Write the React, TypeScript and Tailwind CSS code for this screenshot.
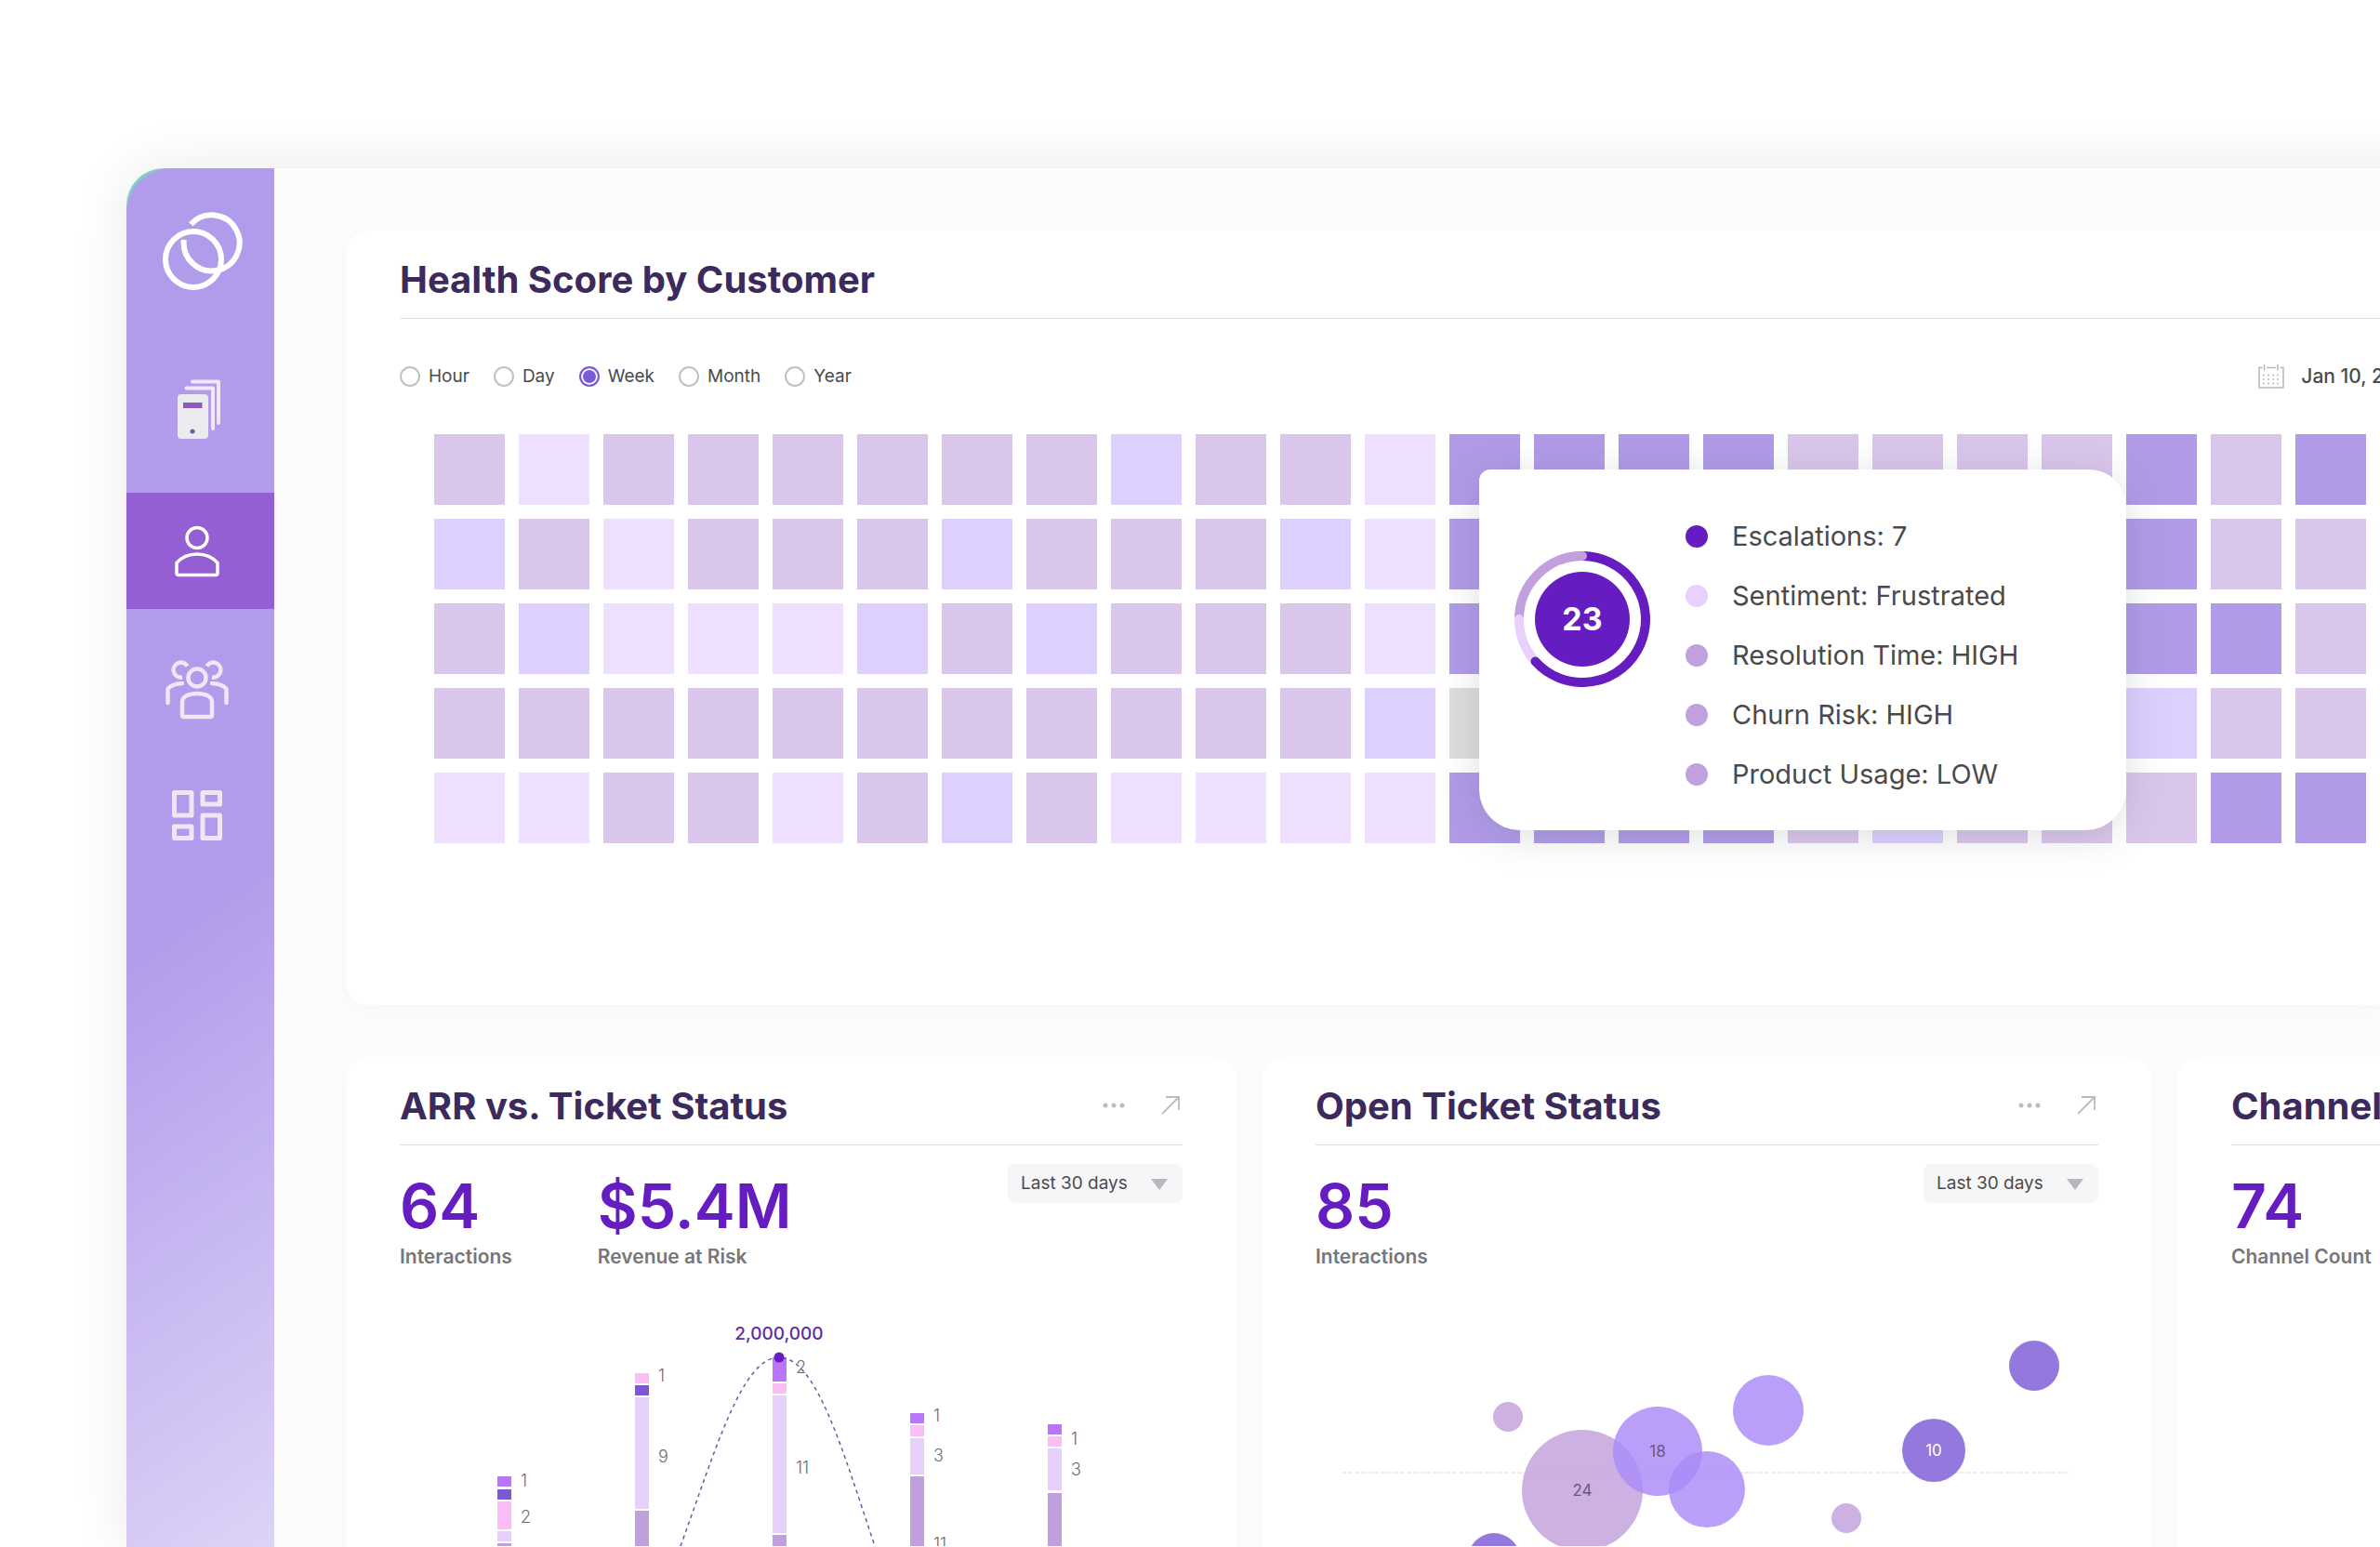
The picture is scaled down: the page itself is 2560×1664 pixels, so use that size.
import { useState } from "react";
import type { ReactNode } from "react";
import clsx from "clsx";

type Tone = "m" | "l" | "b" | "d" | "g";

const TONES: Record<Tone, string> = {
    m: "bg-[#dbc6eb]",
    l: "bg-[#efe0ff]",
    b: "bg-[#ddd0ff]",
    d: "bg-[#b19be9]",
    g: "bg-[#dcdedd]"
};

// one letter per customer, one string per row
const HEATMAP = [
    "mlmmmmmmbmmlddddmmmmdmdm",
    "bmlmmmbmmmbldmmmmmmmdmmm",
    "mblllbmbmmmldmmmmmmmddmm",
    "mmmmmmmmmmmbgmmmmmmmbmmm",
    "llmmlmbmllllddddmbmmmddm"
];

const PERIODS = ["Hour", "Day", "Week", "Month", "Year"];

const DETAILS = [
    { label: "Escalations: 7", color: "bg-[#651dc1]" },
    { label: "Sentiment: Frustrated", color: "bg-[#e8d1fc]" },
    { label: "Resolution Time: HIGH", color: "bg-[#c2a0de]" },
    { label: "Churn Risk: HIGH", color: "bg-[#c2a0de]" },
    { label: "Product Usage: LOW", color: "bg-[#c2a0de]" }
];

const PURPLE = "#b975fb";
const VIOLET = "#7e57d5";
const PINK = "#fbbdf6";
const LILAC = "#e7d0fc";
const MAUVE = "#c0a0dc";

const BARS = [
    {
        x: 105,
        segments: [[199, 210, PURPLE], [213, 224, VIOLET], [226, 256, PINK], [258, 269, LILAC], [271, 274, MAUVE]],
        labels: [[210, "1"], [249, "2"]]
    },
    {
        x: 253,
        segments: [[88, 99, PINK], [101, 112, VIOLET], [114, 234, LILAC], [236, 274, MAUVE]],
        labels: [[97, "1"], [184, "9"]]
    },
    {
        x: 401,
        segments: [[71, 97, PURPLE], [99, 110, PINK], [112, 260, LILAC], [262, 274, MAUVE]],
        labels: [[88, "2"], [196, "11"]]
    },
    {
        x: 549,
        segments: [[131, 142, PURPLE], [144, 156, PINK], [158, 197, LILAC], [199, 274, MAUVE]],
        labels: [[140, "1"], [183, "3"], [278, "11"]]
    },
    {
        x: 697,
        segments: [[143, 154, PURPLE], [156, 167, PINK], [169, 214, LILAC], [217, 274, MAUVE]],
        labels: [[165, "1"], [198, "3"]]
    }
] as { x: number; segments: [number, number, string][]; labels: [number, string][] }[];

const BUBBLES = [
    { x: 207, y: 135, r: 16, fill: "#c2a0dc" },
    { x: 287, y: 214, r: 65, fill: "#c2a0dc", label: "24" },
    { x: 368, y: 172, r: 48, fill: "#a98af8", label: "18" },
    { x: 421, y: 213, r: 41, fill: "#a98af8" },
    { x: 487, y: 128, r: 38, fill: "#a98af8" },
    { x: 571, y: 244, r: 16, fill: "#c2a0dc" },
    { x: 665, y: 171, r: 34, fill: "#7e5ad7", label: "10", light: true },
    { x: 773, y: 80, r: 27, fill: "#7e5ad7" },
    { x: 192, y: 288, r: 28, fill: "#7e5ad7" }
];

const LogoIcon = () => (
    <svg width="88" height="84" viewBox="0 0 88 84" fill="none" stroke="#fff" strokeWidth="6" aria-hidden="true">
        <circle cx="33" cy="51" r="30" />
        <path d="M30.3 13.3A30 30 0 1 1 22.8 30" />
    </svg>
);

const DevicesIcon = () => (
    <svg width="50" height="64" viewBox="-4 0 50 64" fill="none" aria-hidden="true">
        <g stroke="#efe7f8" strokeWidth="4" strokeLinecap="round" strokeLinejoin="round">
            <path d="M16 2.500H44V47" />
            <path d="M9.500 9.500H38V53" />
        </g>
        <rect y="16" width="33" height="48" rx="4" fill="#ececee" />
        <path d="M6 28H26.500" stroke="#8a5cc0" strokeWidth="6" />
        <circle cx="16" cy="56" r="2.500" fill="#7d52b8" />
    </svg>
);

const PersonIcon = () => (
    <svg width="48" height="56" viewBox="0 0 48 56" fill="none" stroke="#fff" strokeWidth="3.500" strokeLinejoin="round" aria-hidden="true">
        <circle cx="24" cy="13.500" r="11" />
        <path d="M2 40.500C8 33.500 15 31 24 31S40 33.500 46 40.500V51.500Q46 53.500 44 53.500H4Q2 53.500 2 51.500Z" />
    </svg>
);

const TeamIcon = () => (
    <svg width="68" height="64" viewBox="0 0 68 64" fill="none" stroke="#efe7f8" strokeWidth="4.500" strokeLinecap="round" strokeLinejoin="round" aria-hidden="true">
        <circle cx="34" cy="19" r="9.500" />
        <path d="M18 45C18 39 25 36 34 36S50 39 50 45V59Q50 61 48 61H20Q18 61 18 59Z" />
        <g strokeLinecap="butt">
            <path d="M23.500 6.500A8 8 0 1 0 18 18.500" />
            <path d="M44.500 6.500A8 8 0 1 1 50 18.500" />
        </g>
        <path d="M18 25C10 25.500 5 28 2.500 31V46" />
        <path d="M50 25C58 25.500 63 28 65.500 31V46" />
    </svg>
);

const BoardIcon = () => (
    <svg width="54" height="54" viewBox="0 0 54 54" fill="none" stroke="#efe5f5" strokeWidth="5" strokeLinejoin="round" aria-hidden="true">
        <rect x="2.500" y="2.500" width="18.500" height="24.500" />
        <rect x="33" y="2.500" width="18.500" height="12.500" />
        <rect x="2.500" y="39" width="18.500" height="12.500" />
        <rect x="33" y="27" width="18.500" height="24.500" />
    </svg>
);

const CalendarIcon = () => (
    <svg width="28" height="28" viewBox="0 0 28 28" fill="none" stroke="#b5b8bb" strokeWidth="1.500" aria-hidden="true">
        <path d="M4.500 4.500H1V26H27V4.500H23.500M9 4.500H19M6.500 1V7.500M21 1V7.500" />
        <path d="M5 12.500H24M5 17H24M5 21.500H24" strokeDasharray="2 3" />
    </svg>
);

const MoreIcon = () => (
    <svg width="24" height="24" viewBox="0 0 24 24" fill="#b9bbbd" aria-hidden="true">
        <circle cx="3" cy="11" r="2.500" />
        <circle cx="12" cy="11" r="2.500" />
        <circle cx="21" cy="11" r="2.500" />
    </svg>
);

const OpenIcon = () => (
    <svg width="22" height="24" viewBox="0 0 22 24" fill="none" stroke="#b9bbbd" strokeWidth="1.800" aria-hidden="true">
        <path d="M0 20L18 2M4 2H18V16" />
    </svg>
);

interface NavItemProps {
    label: string;
    className: string;
    children: ReactNode;
}

const NavItem = ({ label, className, children }: NavItemProps) => (
    <a
        href="#"
        aria-label={label}
        className={clsx("flex w-full items-center justify-center pr-[7px]", className)}
    >
        {children}
    </a>
);

const Sidebar = () => (
    <aside className="w-[159px] shrink-0 overflow-hidden rounded-tl-[40px] bg-[#7fd0c4]">
        <nav className="flex h-full flex-col rounded-tl-[48px] bg-[linear-gradient(145deg,#b19beb_52%,#ddd3f7_100%)]">
            <a href="#" aria-label="Home" className="flex h-[169px] items-center justify-center pt-2 pl-[6px]">
                <LogoIcon />
            </a>
            <NavItem label="Devices" className="h-[180px]"><DevicesIcon /></NavItem>
            <NavItem label="Customers" className="h-[125px] bg-[#935fd2]"><PersonIcon /></NavItem>
            <NavItem label="Teams" className="h-[174px]"><TeamIcon /></NavItem>
            <NavItem label="Boards" className="h-24"><BoardIcon /></NavItem>
        </nav>
    </aside>
);

interface CardProps {
    title: string;
    withActions?: boolean;
    className?: string;
    children: ReactNode;
}

const Card = ({ title, withActions, className, children }: CardProps) => (
    <section className={clsx("bg-white pl-[58px] shadow-[0_6px_20px_rgba(0,0,0,0.025)]", className)}>
        <header className="flex h-[95px] items-center justify-between border-b border-[#dededf] pt-3">
            <h2 className="text-[40px] leading-[48px] font-bold whitespace-nowrap text-[#3c2a5c]">{title}</h2>
            {withActions &&
            <div className="flex items-center gap-10">
                <button type="button" aria-label="More"><MoreIcon /></button>
                <button type="button" aria-label="Open"><OpenIcon /></button>
            </div>}
        </header>
        {children}
    </section>
);

const Stat = ({ value, label }: { value: string; label: string }) => (
    <div>
        <p className="text-[66px] leading-[70px] font-semibold text-[#651dc1]">{value}</p>
        <p className="mt-2 text-[21px] leading-6 font-semibold whitespace-nowrap text-[#77777a]">{label}</p>
    </div>
);

const RangeSelect = ({ label }: { label: string }) => (
    <div className="relative mt-5">
        <select
            aria-label={label}
            className="h-[42px] w-[188px] appearance-none rounded-lg bg-[#f6f6f8] pl-[14px] text-[19px] text-[#4b4b4d]"
        >
            <option>Last 30 days</option>
        </select>
        <svg
            className="pointer-events-none absolute top-4 right-4"
            width="18"
            height="12"
            viewBox="0 0 18 12"
            fill="#b7b8bb"
            aria-hidden="true"
        >
            <path d="M0 0H18L9 12Z" />
        </svg>
    </div>
);

const ScoreRing = () => (
    <svg width="146" height="146" viewBox="0 0 146 146" fill="none" strokeWidth="10" strokeLinecap="round">
        <path d="M5 73A68 68 0 0 1 73 5" stroke="#c2a0de" />
        <path d="M22.500 118.500A68 68 0 0 1 5 73" stroke="#e8d1fc" />
        <path d="M73 5A68 68 0 1 1 22.500 118.500" stroke="#651dc1" />
        <path d="M50 9A68 68 0 0 1 73 5" stroke="#c2a0de" />
        <circle cx="73" cy="73" r="51" fill="#651dc1" />
        <text x="73" y="85" textAnchor="middle" fill="#fff" className="text-[34px] font-bold">23</text>
    </svg>
);

const ScoreTooltip = () => (
    <div
        role="tooltip"
        className="absolute top-[38px] left-[1124px] flex w-[696px] rounded-tl-xl rounded-tr-[40px] rounded-b-[44px] bg-white pt-10 pb-7 pl-[38px] shadow-[0_6px_44px_rgba(60,80,70,0.18)]"
    >
        <div className="pt-12">
            <ScoreRing />
        </div>
        <ul className="ml-[38px]">
            {DETAILS.map(({ label, color }) => (
                <li key={label} className="flex h-16 items-center gap-[26px] text-[29px] text-[#4a4a4c]">
                    <span className={clsx("size-6 rounded-full", color)} />
                    {label}
                </li>
            ))}
        </ul>
    </div>
);

const Heatmap = () => (
    <div className="relative mt-[46px] ml-[37px]">
        <div className="grid grid-cols-[repeat(24,76px)] gap-[15px]">
            {HEATMAP.map((row, y) => row.split("").map((tone, x) => (
                <span key={`${y}-${x}`} className={clsx("h-[76px]", TONES[tone as Tone])} />
            )))}
        </div>
        <ScoreTooltip />
    </div>
);

const HealthScore = () => {
    const [period, setPeriod] = useState("Week");

    return (
        <Card title="Health Score by Customer" className="rounded-l-3xl pb-[174px]">
            <div className="mt-[46px] flex h-8 items-center justify-between">
                <div className="flex gap-[26px]">
                    {PERIODS.map(item => (
                        <label key={item} className="flex items-center gap-[9px] text-[19px] text-[#4b4b4d]">
                            <input
                                type="radio"
                                name="period"
                                value={item}
                                checked={item === period}
                                onChange={() => setPeriod(item)}
                                className="size-[22px] appearance-none rounded-full border-2 border-[#bfc1c3] bg-white checked:border-[#7a5ad8] checked:bg-[#7a5ad8] checked:shadow-[inset_0_0_0_2px_#fff]"
                            />
                            {item}
                        </label>
                    ))}
                </div>
                <button type="button" className="-mr-1 flex items-center gap-[18px] text-[21px] font-medium whitespace-nowrap text-[#4b4b4d]">
                    <CalendarIcon />
                    Jan 10, 2
                </button>
            </div>
            <Heatmap />
        </Card>
    );
};

const RevenueChart = () => (
    <svg viewBox="0 0 842 274" className="mt-[25px] w-full text-lg" fill="none">
        {BARS.map(({ x, segments, labels }) => (
            <g key={x}>
                {segments.map(([top, bottom, fill]) => (
                    <rect key={top} x={x} y={top} width="15" height={bottom - top} fill={fill} />
                ))}
                {labels.map(([y, text]) => (
                    <text key={y} x={x + 25} y={y} fill="#6d6d70" className="font-light">{text}</text>
                ))}
            </g>
        ))}
        <path
            d="M302 274C340 170 368 71 408 71S476 170 511 274"
            stroke="#6a5aa8"
            strokeWidth="1.500"
            strokeDasharray="4 4"
        />
        <circle cx="408" cy="71" r="5.500" fill="#651dc1" />
        <text x="408" y="52" textAnchor="middle" fill="#5e2aa6" className="text-[19px] font-medium">2,000,000</text>
    </svg>
);

const TicketChart = () => (
    <svg viewBox="0 0 842 274" className="mt-[25px] w-full text-[17px]" fill="none">
        <path d="M28 195H812" stroke="#ebebed" strokeWidth="2" strokeDasharray="5 2" />
        {BUBBLES.map(({ x, y, r, fill, label, light }) => (
            <g key={x}>
                <circle cx={x} cy={y} r={r} fill={fill} fillOpacity="0.82" />
                {label &&
                <text x={x} y={y + 6} textAnchor="middle" fill={light ? "#fff" : "#6b5785"}>{label}</text>}
            </g>
        ))}
    </svg>
);

export default function App() {
    return (
        <div className="flex h-screen overflow-hidden bg-white pt-[181px] pl-[136px] font-['Inter',sans-serif]">
            <div className="-mr-20 flex min-w-0 flex-1 rounded-tl-[40px] bg-[#fcfcfc] pr-20 shadow-[0_0_60px_rgba(0,0,0,0.09)]">
                <Sidebar />
                <main className="min-w-0 flex-1 overflow-hidden pt-[67px] pl-[77px]">
                    <HealthScore />
                    <div className="mt-14 grid grid-cols-[minmax(0,958fr)_minmax(0,958fr)_minmax(0,218fr)] gap-[27px]">
                        <Card title="ARR vs. Ticket Status" withActions className="rounded-3xl pr-[58px] pb-14">
                            <div className="flex items-start justify-between">
                                <div className="flex gap-[92px] pt-[30px]">
                                    <Stat value="64" label="Interactions" />
                                    <Stat value="$5.4M" label="Revenue at Risk" />
                                </div>
                                <RangeSelect label="Revenue range" />
                            </div>
                            <RevenueChart />
                        </Card>
                        <Card title="Open Ticket Status" withActions className="rounded-3xl pr-[58px] pb-14">
                            <div className="flex items-start justify-between">
                                <div className="pt-[30px]">
                                    <Stat value="85" label="Interactions" />
                                </div>
                                <RangeSelect label="Ticket range" />
                            </div>
                            <TicketChart />
                        </Card>
                        <Card title="Channel" className="rounded-l-3xl">
                            <div className="pt-[30px]">
                                <Stat value="74" label="Channel Count" />
                            </div>
                        </Card>
                    </div>
                </main>
            </div>
        </div>
    );
}
